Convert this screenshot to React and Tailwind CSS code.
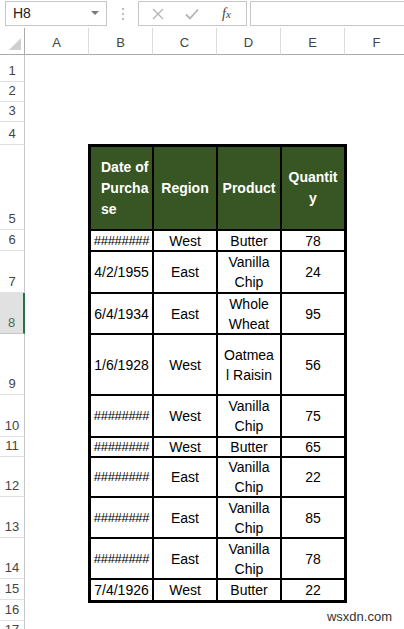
import React from 'react';

const COLS = ['A', 'B', 'C', 'D', 'E', 'F'];

// row number -> height in px (sheet rows 1..17)
const ROW_HEIGHTS = [27, 20, 20, 23, 85, 21, 42, 41, 61, 42, 20, 40, 41, 41, 21, 21, 20];

const HASH = '########';

const DATA = [
  [HASH, 'West', ['Butter'], '78'],
  ['4/2/1955', 'East', ['Vanilla', 'Chip'], '24'],
  ['6/4/1934', 'East', ['Whole', 'Wheat'], '95'],
  ['1/6/1928', 'West', ['Oatmea', 'l Raisin'], '56'],
  [HASH, 'West', ['Vanilla', 'Chip'], '75'],
  [HASH, 'West', ['Butter'], '65'],
  [HASH, 'East', ['Vanilla', 'Chip'], '22'],
  [HASH, 'East', ['Vanilla', 'Chip'], '85'],
  [HASH, 'East', ['Vanilla', 'Chip'], '78'],
  ['7/4/1926', 'West', ['Butter'], '22'],
];

function TopBar() {
  return (
    <div className="flex h-[28px] items-start pt-[1px]">
      <div className="ml-[5px] flex h-[25px] w-[102px] items-center justify-between border border-[#c6c6c6] pl-[7px] pr-[7px]">
        <span className="text-[14px] text-[#222]">H8</span>
        <svg width="8" height="5" viewBox="0 0 8 5">
          <path d="M0 0 L8 0 L4 4 Z" fill="#7a7a7a" />
        </svg>
      </div>
      <div className="flex h-[25px] w-[31px] flex-col items-center justify-center gap-[3px]">
        <span className="h-[2px] w-[2px] bg-[#bdbdbd]" />
        <span className="h-[2px] w-[2px] bg-[#bdbdbd]" />
        <span className="h-[2px] w-[2px] bg-[#bdbdbd]" />
      </div>
      <div className="flex h-[25px] w-[109px] items-center border border-[#c6c6c6]">
        <svg className="ml-[13px]" width="12" height="12" viewBox="0 0 12 12">
          <path d="M1 1 L11 11 M11 1 L1 11" stroke="#b4b4b4" strokeWidth="1.3" />
        </svg>
        <svg className="ml-[21px]" width="14" height="12" viewBox="0 0 14 12">
          <path d="M1 6.5 L5 10.5 L13 1.5" stroke="#b4b4b4" strokeWidth="1.8" fill="none" />
        </svg>
        <span className="ml-[23px] font-['Liberation_Serif',serif] text-[14px] italic text-[#444]">
          f<span className="text-[11px]">x</span>
        </span>
      </div>
      <div className="ml-[3px] h-[25px] flex-1 border border-r-0 border-[#c6c6c6]" />
    </div>
  );
}

function HeaderCell({ children, center, pl }) {
  return (
    <div
      className={`flex flex-col justify-center bg-[#375623] font-bold leading-[21px] text-white ${
        center ? 'items-center' : 'items-start'
      } ${pl || ''}`}
    >
      {children}
    </div>
  );
}

function Cell({ lines }) {
  return (
    <div className="flex flex-col items-center justify-center bg-white leading-[20px] text-black">
      {lines.map((l, i) => (
        <span key={i} className={l === HASH ? 'text-[13px] tracking-[-0.3px]' : ''}>
          {l}
        </span>
      ))}
    </div>
  );
}

function DataTable() {
  return (
    <div className="-mb-[3px] -ml-[1px] -mr-[2px] -mt-[1px] grid grid-cols-[61px_62px_62px_62px] grid-rows-[82px_19px_40px_39px_59px_40px_18px_38px_39px_39px_20px] gap-[2px] bg-black p-[3px] text-[14px]">
      <HeaderCell pl="pl-[10px]">
        <span>Date of</span>
        <span>Purcha</span>
        <span>se</span>
      </HeaderCell>
      <HeaderCell center>
        <span>Region</span>
      </HeaderCell>
      <HeaderCell center>
        <span>Product</span>
      </HeaderCell>
      <HeaderCell center>
        <span>Quantit</span>
        <span>y</span>
      </HeaderCell>
      {DATA.map((row, r) => (
        <React.Fragment key={r}>
          <Cell lines={[row[0]]} />
          <Cell lines={[row[1]]} />
          <Cell lines={row[2]} />
          <Cell lines={[row[3]]} />
        </React.Fragment>
      ))}
    </div>
  );
}

function Sheet() {
  return (
    <div
      className="grid grid-cols-[25px_64px_64px_64px_64px_64px_64px]"
      style={{ gridTemplateRows: `27px ${ROW_HEIGHTS.map((h) => h + 'px').join(' ')}` }}
    >
      {/* corner */}
      <div className="flex items-end justify-end border-b border-r border-[#ababab] pb-[4px] pr-[3px]">
        <svg width="12" height="12" viewBox="0 0 12 12">
          <path d="M12 0 L12 12 L0 12 Z" fill="#cfcfcf" />
        </svg>
      </div>
      {COLS.map((c) => (
        <div
          key={c}
          className="flex items-center justify-center border-b border-r border-b-[#ababab] border-r-[#dcdcdc] pt-[3px] text-[13px] text-[#444]"
        >
          {c}
        </div>
      ))}
      {ROW_HEIGHTS.map((h, i) => {
        const n = i + 1;
        const sel = n === 8;
        return (
          <div
            key={n}
            style={{ gridRow: n + 1, gridColumn: 1 }}
            className={`flex items-end justify-center border-b pb-[2px] text-[13px] leading-[16px] ${
              sel
                ? 'border-b-[#c6c6c6] border-r-2 border-r-[#217346] bg-[#e1e1e1] text-[#4a6b52]'
                : 'border-r border-b-[#e1e1e1] border-r-[#c6c6c6] text-[#444]'
            }`}
          >
            {n}
          </div>
        );
      })}
      <div className="col-start-3 col-end-7 row-start-6 row-end-[17] flex">
        <DataTable />
      </div>
    </div>
  );
}

export default function App() {
  return (
    <div className="relative h-[629px] w-[404px] overflow-hidden bg-white font-['Liberation_Sans',Arial,sans-serif]">
      <TopBar />
      <Sheet />
      <div className="absolute bottom-[3px] right-[12px] text-[13px] text-[#333]">wsxdn.com</div>
    </div>
  );
}
